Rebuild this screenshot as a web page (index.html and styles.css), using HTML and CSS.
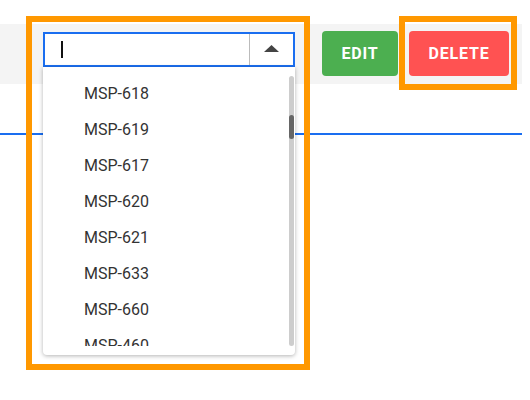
FILE: index.html
```html
<!DOCTYPE html>
<html lang="en">
<head>
    <meta charset="UTF-8">
    <title>Combo select</title>
    <link rel="stylesheet" href="styles.css">
</head>
<body>
    <div class="page">
        <div class="toolbar">
            <div class="combo">
                <div class="combo-input"><span class="caret"></span></div>
                <div class="combo-toggle">
                    <svg width="15" height="7" viewBox="0 0 15 7"><polygon points="0,7 7.5,0 15,7" fill="#444"/></svg>
                </div>
                <div class="dropdown">
                    <ul class="options">
                        <li>MSP-618</li>
                        <li>MSP-619</li>
                        <li>MSP-617</li>
                        <li>MSP-620</li>
                        <li>MSP-621</li>
                        <li>MSP-633</li>
                        <li>MSP-660</li>
                        <li>MSP-460</li>
                    </ul>
                    <div class="scroll-track"><div class="scroll-thumb"></div></div>
                </div>
            </div>
            <button class="btn btn-edit">EDIT</button>
            <button class="btn btn-delete">DELETE</button>
        </div>
        <div class="rule"></div>

        <div class="mark mark-combo"></div>
        <div class="mark mark-delete"></div>
    </div>
</body>
</html>
```

FILE: styles.css
```css
body {
    margin: 0;
    padding: 0;
    background: #fff;
    font-family: Roboto, "Liberation Sans", sans-serif;
}
.page {
    position: relative;
    width: 522px;
    height: 400px;
    padding-top: 24px;
    box-sizing: border-box;
    overflow: hidden;
}
.toolbar {
    height: 60px;
    background: #f4f4f4;
    display: flex;
    align-items: flex-start;
}
.combo {
    position: relative;
    margin-left: 43px;
    margin-top: 8px;
    width: 252px;
    height: 35px;
    box-sizing: border-box;
    border: 2px solid #1a6ef0;
    background: #fff;
    display: flex;
}
.combo-input {
    flex: 1;
    display: flex;
    align-items: center;
    padding-left: 16px;
}
.caret {
    width: 2px;
    height: 17px;
    background: #111;
}
.combo-toggle {
    width: 44px;
    border-left: 1px solid #bbb;
    display: flex;
    align-items: center;
    justify-content: center;
    padding-bottom: 2px;
    box-sizing: border-box;
}
.dropdown {
    position: absolute;
    top: calc(100% + 2px);
    left: -2px;
    right: -2px;
    height: 288px;
    box-sizing: border-box;
    padding: 9px 1px 9px 0;
    background: #fff;
    border-radius: 0 0 4px 4px;
    box-shadow: 0 1px 4px rgba(0, 0, 0, 0.3);
    display: flex;
    z-index: 2;
}
.options {
    flex: 1;
    list-style: none;
    margin: 0;
    padding: 0;
    overflow: hidden;
}
.options li {
    height: 36px;
    line-height: 36px;
    padding-left: 41px;
    font-size: 16px;
    color: #333;
}
.scroll-track {
    width: 5px;
    background: #cdcdcd;
    border-radius: 3px;
}
.scroll-thumb {
    margin-top: 39px;
    height: 24px;
    background: #666;
    border-radius: 3px;
}
.btn {
    margin-top: 7px;
    height: 45px;
    border: none;
    border-radius: 4px;
    color: #fff;
    font-family: Roboto, "Liberation Sans", sans-serif;
    font-size: 16px;
    font-weight: bold;
    letter-spacing: 0.8px;
    cursor: pointer;
}
.btn-edit {
    margin-left: 27px;
    width: 76px;
    background: #4caf50;
}
.btn-delete {
    margin-left: 11px;
    width: 100px;
    background: #ff5252;
}
.rule {
    margin-top: 49px;
    height: 2px;
    background: #1a6ef0;
}
.mark {
    position: absolute;
    border: 6px solid #ff9800;
    box-sizing: border-box;
    z-index: 3;
}
.mark-combo {
    left: 26px;
    top: 16px;
    width: 284px;
    height: 354px;
}
.mark-delete {
    left: 399px;
    top: 16px;
    width: 118px;
    height: 74px;
}
```
